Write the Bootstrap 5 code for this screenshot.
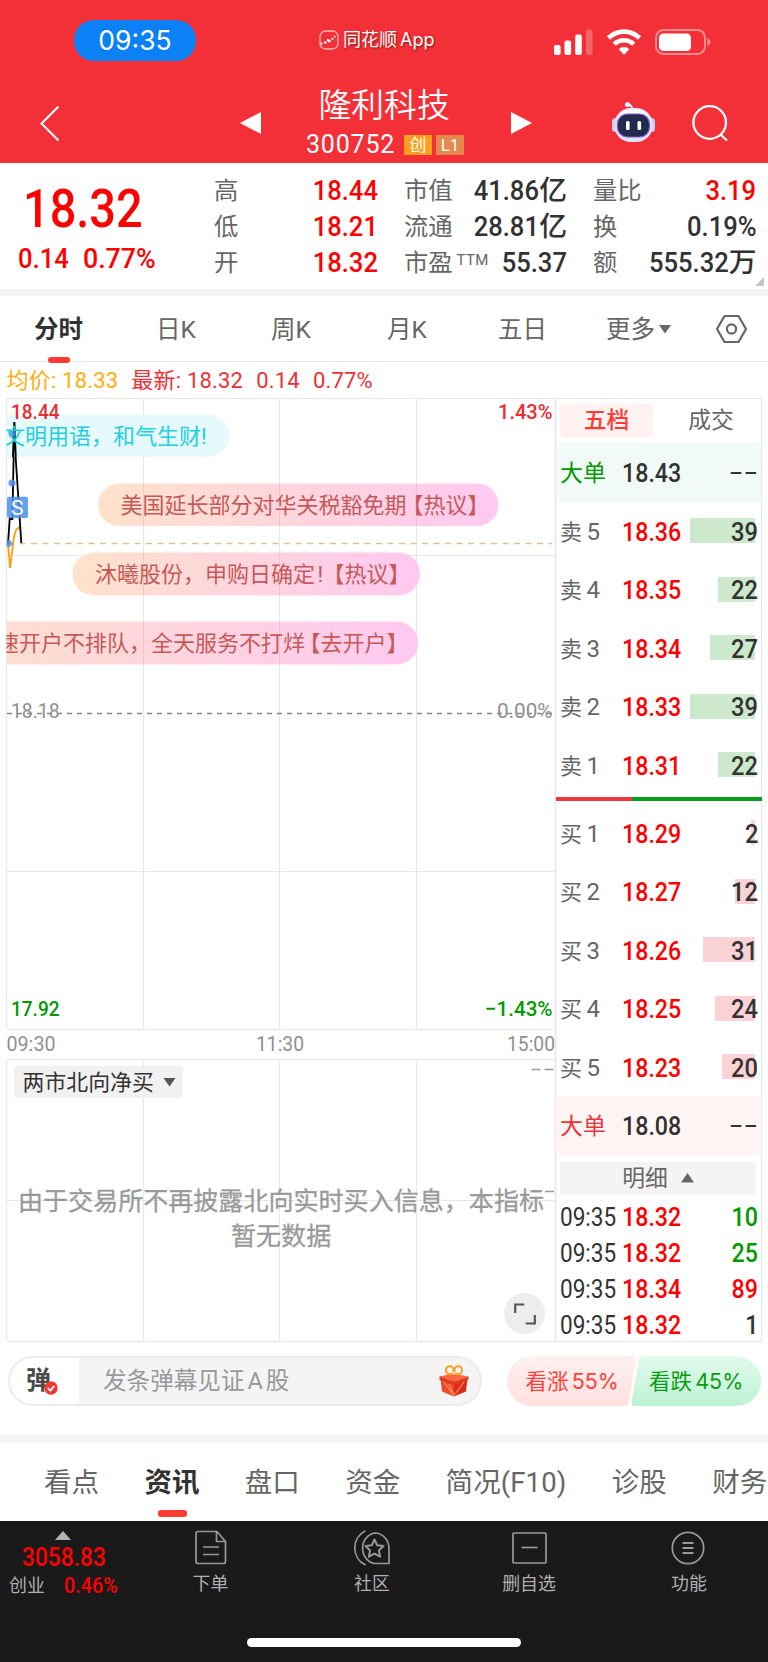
<!DOCTYPE html>
<html lang="zh-CN">
<head>
<meta charset="utf-8">
<meta name="viewport" content="width=device-width, initial-scale=1">
<title>隆利科技 300752</title>
<link href="https://cdn.jsdelivr.net/npm/bootstrap@5.3.0/dist/css/bootstrap.min.css" rel="stylesheet">
<style>
  body{font-family:Roboto,"Noto Sans CJK SC",sans-serif;width:768px;height:1662px;overflow:hidden;background:#fff;color:#323232;line-height:1}
  svg{display:block;overflow:visible}
  .up{color:#ff0000}.down{color:#090}.ink{color:#323232}.dim{color:#666}
  .din{display:inline-block;transform:scaleX(.91);transform-origin:0 50%;white-space:pre;font-weight:500}
  .din-r{transform-origin:100% 50%}
  .half{font-feature-settings:"halt"}
  /* header */
  .top{height:163px;background:#f33038;color:#fff}
  .statusbar{height:80px;padding-left:74px}
  .clock{width:122px;height:41px;border-radius:20px;background:#0c80f5;font:400 26.5px/41px Inter,sans-serif;text-align:center}
  .brand{margin-left:123px;width:231px;font:400 18px/24px Inter,"Noto Sans CJK SC",sans-serif;text-shadow:1px 1px 2px rgba(70,0,0,.6);gap:4px;word-spacing:-2px}
  .titlebar{display:grid;grid-template-columns:40px 200px 66px 158px 47px 100px 80px;height:83px}
  .name{font-size:32.8px;line-height:48px;font-weight:350;margin:1.5px 0 0 12.5px;white-space:nowrap}
  .code{font-size:25px;line-height:20px;letter-spacing:.8px}
  .tagbox{width:28.5px;height:20px;font-size:17px;line-height:20px;text-align:center}
  /* quote */
  .quote{height:126px;display:grid;grid-template-columns:214px 164px 189px 189.500px;padding-right:11.500px;position:relative}
  .big{font-size:54.5px;line-height:62px;transform:scaleX(.86);margin:13.5px 0 0 22.5px}
  .chg{font-size:27px;line-height:30px}
  .chg .din{transform:scaleX(.95)}
  .stat{display:grid;grid-template-rows:repeat(3,35.8px);padding-top:10px}
  .stat>div{display:flex;justify-content:space-between;line-height:36px;font-size:24.3px;color:#666;white-space:nowrap}
  .stat b{font-weight:500;font-size:27.8px}
  .stat .din{transform:scaleX(.92)}
  .ttm{font-size:15px;line-height:30px;margin-left:4px;font-weight:400;letter-spacing:.3px}
  .band{height:7px;background:#f4f4f4}
  /* period tabs */
  .periods{height:66px;display:grid;grid-template-columns:117px 118px 112px 120px 111px 138px 1fr;border-bottom:1px solid #e8e8e8;font-size:24.5px;line-height:67px;color:#666;text-align:center}
  .on{color:#323232;font-weight:700;position:relative}
  .on::after{content:"";position:absolute;left:50%;bottom:0;width:22px;height:6px;margin-left:-11px;border-radius:3px;background:#ff3b33}
  .legend-row{height:36px;padding-left:6.5px;font-size:22px;line-height:37px;letter-spacing:.2px;color:#ee2f36}
  .legend-row span{margin-right:13px}
  /* order book */
  .main{height:944px}
  .book{width:206px;border:1px solid #e8e8e8;border-left:0}
  .booktabs{height:44px;padding:4.5px 0 0 4px;font-size:22.8px;line-height:34px;text-align:center}
  .booktabs>div{width:93px;height:34px}
  .sel{background:#fff2f1;color:#ff3b33;border-radius:4px;font-weight:500}
  .lv{height:58.5px;display:grid;grid-template-columns:62px 71px 1fr;padding:0 3px 0 4px;line-height:61px;font-size:22px;color:#666;white-space:nowrap}
  .lv .n{font-size:24px;margin-left:4.5px}
  .lv .p,.tick .p{font-size:25.5px}
  .lv .q{position:relative;text-align:right;font-size:25.5px;color:#323232}
  .lv .q i{position:absolute;right:3.500px;top:16.5px;height:25px}
  .lv .q .din{position:relative;transform:scaleX(.93)}
  .sell i{background:#cce9cd}.buy i{background:#fbd3d6}
  .lv.bigrow{font-size:23px}
  .depth{height:3.5px;margin:3px -1px 3px 0}
  .detail{height:33px;margin:7px 5px 3px 4px;background:#f4f4f4;font-size:22.8px;line-height:33px;color:#666;gap:13px}
  .tick{height:36px;display:grid;grid-template-columns:62px 71px 1fr;padding:0 3px 0 4px;line-height:38px;font-size:25.5px;white-space:nowrap}
  .tick .t{transform:scaleX(.885);font-weight:450}
  /* comment bar */
  .cbar{height:93px;padding:14px 7px 0 8px}
  .cinput{width:474px;height:50px;border:2px solid #ececec;border-radius:25px;background:#f4f4f4;overflow:hidden}
  .clead{width:69px;background:#fff;padding-left:16px;position:relative;font-size:25px;line-height:45px;font-weight:700;color:#4a4a4a}
  .clead svg{position:absolute;left:34px;top:23px}
  .cph{margin-left:24px;width:336px;font-size:23.6px;line-height:46px;color:#999;word-spacing:-3px}
  .votes{width:254px;height:50px;margin-left:25px;position:relative;font-size:21.600px}
  .votes svg{position:absolute;left:0;top:0}
  .votes span{position:relative;line-height:51px;white-space:nowrap}
  .votes em{font:400 21.500px/50px Inter,sans-serif;margin-left:3px}
  /* info tabs */
  .info{height:78px;font-size:27.5px;line-height:80px;color:#666;gap:45.4px;padding-left:44px;white-space:nowrap;overflow:hidden}
  .info .on::after{width:29px;margin-left:-14px;bottom:4.5px;height:6.5px}
  .dock{height:141px;background:#1a1a1a;color:#b0b0b0;display:grid;grid-template-columns:130px 161px 162px 152px 1fr;font-size:17.9px;position:relative}
  .dock .it{display:grid;grid-template-rows:52px 20px;justify-items:center;align-content:start;line-height:22px}
  .dock .it svg{margin-top:9px}
  .home{position:absolute;left:247px;top:117px;width:274px;height:9px;border-radius:5px;background:#fff}
</style>
</head>
<body>
<header class="top">
  <div class="statusbar d-flex align-items-center">
    <div class="clock">09:35</div>
    <div class="brand d-flex align-items-center">
      <svg width="20" height="20" viewBox="0 0 20 20" fill="none" stroke="#fff"><rect x="1" y="1" width="18" height="18" rx="5.5" stroke="#ffb7b9" stroke-width="1.3"/><path d="M1.500 13.500h2M5 12.500h2.500M8 9.500l2 1.500M9.500 12l2-2M13 9.500l1-1.500M15.500 7l.5-1" stroke-width="2"/></svg>
      <span>同花顺 App</span>
    </div>
    <svg width="160" height="30" viewBox="0 0 160 30" fill="#fff">
      <rect x="4" y="20" width="6.6" height="10" rx="2"/><rect x="14.5" y="15.500" width="6.600" height="14.500" rx="2"/><rect x="25.200" y="9.500" width="6.600" height="20.500" rx="2"/><rect x="36" y="4.500" width="6.600" height="25.500" rx="2" opacity=".25"/>
      <g fill="none" stroke="#fff" stroke-width="4.600"><path d="M58.500 13a22 22 0 0 1 31 0"/><path d="M64.200 19.200a14 14 0 0 1 19.600 0"/></g><path d="M68.700 24.200a7.600 7.600 0 0 1 10.600 0L74 29.800z"/>
      <rect x="106" y="5" width="49" height="24" rx="7.500" fill="none" stroke="#fff" stroke-opacity=".45" stroke-width="2"/><rect x="109" y="8.500" width="32" height="17.500" rx="4.500"/><path d="M157.500 13q3 1.500 3 4t-3 4z" opacity=".5"/>
    </svg>
  </div>
  <div class="titlebar">
    <span></span>
    <svg width="20" height="36" viewBox="0 0 20 36" style="margin-top:26px"><path d="M18.500.5L1.500 17.500l17 17" fill="none" stroke="#fff" stroke-width="2"/></svg>
    <svg width="21" height="22" style="margin-top:32px"><path d="M0 11L21 0v22z" fill="#fff"/></svg>
    <div>
      <div class="name">隆利科技</div>
      <div class="d-flex align-items-center" style="margin-top:5.500px"><span class="code">300752</span><span class="tagbox" style="background:#ff9f1d;margin-left:9px">创</span><span class="tagbox" style="background:#e38a4c;margin-left:4px">L1</span></div>
    </div>
    <svg width="21" height="22" style="margin:32px 0 0 47px"><path d="M21 11L0 0v22z" fill="#fff"/></svg>
    <svg width="44" height="42" viewBox="0 0 44 42" style="margin:21px 0 0 100px">
      <path d="M21 9q1-5-5.500-6" fill="none" stroke="#e6e8fa" stroke-width="2"/><circle cx="16.500" cy="3.500" r="2.600" fill="#eceefb"/>
      <rect x="1" y="17" width="7" height="14" rx="3.500" fill="#c9cdf3"/><rect x="37" y="17" width="7" height="14" rx="3.500" fill="#c9cdf3"/>
      <rect x="3.500" y="7" width="38" height="34" rx="16" fill="#dfe2fa"/><path d="M6 19q4-11 16.500-11t16.500 11" fill="#fff"/>
      <rect x="6.500" y="13" width="32" height="23" rx="10" fill="#202b4e" stroke="#8358d8" stroke-width="1.200"/><rect x="15" y="20" width="3.600" height="9" rx="1.600" fill="#fff"/><rect x="26.500" y="20" width="3.600" height="9" rx="1.600" fill="#fff"/>
    </svg>
    <svg width="38" height="38" viewBox="0 0 38 38" fill="none" stroke="#fff" stroke-width="2.300" style="margin:24px 0 0 81px"><circle cx="17.700" cy="18.500" r="16.300"/><path d="M28.500 30.500l6.500 6"/></svg>
  </div>
</header>

<section class="quote">
  <div>
    <div class="din big up">18.32</div>
    <div class="chg up d-flex" style="padding-left:18px;margin-top:5px"><span class="din" style="width:65px">0.14</span><span class="din" style="transform:scaleX(.99)">0.77%</span></div>
  </div>
  <div class="stat">
    <div>高<b class="din din-r up">18.44</b></div><div>低<b class="din din-r up">18.21</b></div><div>开<b class="din din-r up">18.32</b></div>
  </div>
  <div class="stat" style="padding-left:26px">
    <div>市值<span class="ink"><b class="din din-r">41.86</b><b>亿</b></span></div><div>流通<span class="ink"><b class="din din-r">28.81</b><b>亿</b></span></div><div><span class="d-flex">市盈<span class="ttm">TTM</span></span><b class="din din-r ink">55.37</b></div>
  </div>
  <div class="stat" style="padding-left:26px">
    <div>量比<b class="din din-r up">3.19</b></div><div>换<b class="din din-r ink">0.19%</b></div><div>额<span class="ink"><b class="din din-r">555.32</b><b>万</b></span></div>
  </div>
  <svg width="9" height="9" style="position:absolute;right:4px;bottom:3px"><path d="M9 0v9H0z" fill="#c4c4c4"/></svg>
</section>
<div class="band"></div>

<nav class="periods">
  <div class="on">分时</div><div>日K</div><div>周K</div><div>月K</div><div>五日</div>
  <div class="d-flex align-items-center" style="padding-left:28px">更多<svg width="12" height="9" style="margin-left:4px"><path d="M0 0h12L6 8.500z" fill="#666"/></svg></div>
  <svg width="32" height="30" viewBox="0 0 32 30" fill="none" stroke="#666" stroke-width="2.200" stroke-linejoin="round" style="margin:18px 0 0"><path d="M8.500 2h14L30 15l-7.500 13h-14L1 15z"/><circle cx="15.500" cy="15" r="4.600"/></svg>
</nav>
<div class="legend-row"><span style="color:#ffae0c">均价: 18.33</span><span>最新: 18.32</span><span>0.14</span><span>0.77%</span></div>

<main class="main d-flex">
  <svg width="556" height="944" viewBox="0 398 556 944" font-family="Roboto,'Noto Sans CJK SC',sans-serif">
    <defs>
      <linearGradient id="dm"><stop offset="0" stop-color="#ffdfc6"/><stop offset=".5" stop-color="#ffd0da"/><stop offset="1" stop-color="#ffc3ef"/></linearGradient>
      <clipPath id="plot"><rect x="6.500" y="398" width="549" height="944"/></clipPath>
    </defs>
    <g fill="none" stroke="#e8e8e8" stroke-width="1.200">
      <path d="M6.500 398.500H556M6.500 555.500H555M6.500 871.500H555M6.500 1029.500H555M6.500 398V1029M143.500 398V1029M279.500 398V1029M416.500 398V1029"/>
      <path d="M6.500 1059.500H555M6.500 1200.500H555M6.500 1341.500H555M6.500 1059V1341M143.500 1059V1341M279.500 1059V1341M416.500 1059V1341"/>
      <path d="M555.500 398V1342" stroke-width="1.800"/>
    </g>
    <path d="M8 543.500H552" stroke="#dfc191" stroke-width="1.400" stroke-dasharray="6 5.500"/>
    <path d="M7 713.500H552" stroke="#888" stroke-width="1.300" stroke-dasharray="5 5"/>
    <g fill="none" stroke-width="1.800"><path d="M8 543L10 568L12 553L13.700 538L16 530L20 526.500" stroke="#ff9c14"/><path d="M8 543.500L9.700 519H12.400L14.300 422L15.700 458L21.300 543" stroke="#000"/></g>
    <g clip-path="url(#plot)" font-size="22">
      <rect x="-40" y="414.500" width="269" height="42.500" rx="21.200" fill="#e3f8fc" fill-opacity=".9"/>
      <path d="M13 457L14.300 422L15.700 457" fill="none" stroke="#000" stroke-width="2"/>
      <g fill="#4d91ec" opacity=".85"><circle cx="12.300" cy="434" r="3.600"/><circle cx="12" cy="483" r="3.600"/><circle cx="8.500" cy="543.500" r="3.400"/><rect x="7" y="496.700" width="21" height="21.300" rx="2"/></g>
      <text x="17.300" y="515" font-size="21" fill="#fff" text-anchor="middle">S</text>
      <text x="3" y="444" fill="#22d0dd">文明用语，和气生财!</text>
      <g fill="url(#dm)" fill-opacity=".9"><rect x="98" y="483.500" width="400.500" height="42.500" rx="21.200"/><rect x="72.500" y="552.500" width="347.500" height="43" rx="21.500"/><rect x="-70" y="621.500" width="488" height="43" rx="21.500"/></g>
      <g stroke="#d9a9b5" stroke-opacity=".35"><path d="M143.500 484v42M279.500 484v42M416.500 484v42M143.500 553v42M279.500 553v42M143.500 622v42M279.500 622v42"/></g>
      <g fill="#c45a58">
        <text y="513"><tspan x="120.500">美国延长部分对华关税豁免期</tspan><tspan x="412.500" class="half">【热议】</tspan></text>
        <text y="582"><tspan x="95">沐曦股份，申购日确定</tspan><tspan x="317.500">!</tspan><tspan x="333.500" class="half">【热议】</tspan></text>
        <text y="651"><tspan x="-3">速开户不排队，全天服务不打烊</tspan><tspan x="309.500" class="half">【去开户】</tspan></text>
      </g>
    </g>
    <g font-size="21" font-weight="500">
      <text x="11" y="418.500" fill="#e92d33" textLength="48.500" lengthAdjust="spacingAndGlyphs">18.44</text>
      <text x="498" y="418.500" fill="#e92d33" textLength="54.500" lengthAdjust="spacingAndGlyphs">1.43%</text>
      <text x="11" y="717.500" fill="#8f8f8f" font-weight="400" textLength="48.500" lengthAdjust="spacingAndGlyphs">18.18</text>
      <text x="497" y="717.500" fill="#8f8f8f" font-weight="400" textLength="55.500" lengthAdjust="spacingAndGlyphs">0.00%</text>
      <text x="11" y="1016" fill="#090" textLength="48.500" lengthAdjust="spacingAndGlyphs">17.92</text>
      <text x="485" y="1016" fill="#090" textLength="67.500" lengthAdjust="spacingAndGlyphs">−1.43%</text>
    </g>
    <g font-size="21" fill="#8f8f8f">
      <text x="6.500" y="1050.500" textLength="49" lengthAdjust="spacingAndGlyphs">09:30</text>
      <text x="256" y="1050.500" textLength="48" lengthAdjust="spacingAndGlyphs">11:30</text>
      <text x="507" y="1050.500" textLength="48" lengthAdjust="spacingAndGlyphs">15:00</text>
    </g>
    <rect x="14" y="1066" width="169" height="32" rx="3" fill="#f1f1f1"/>
    <text x="22.500" y="1090" font-size="21.900" fill="#333">两市北向净买</text>
    <path d="M163.500 1078h12l-6 8.500z" fill="#555"/>
    <path d="M531.500 1069.500h9M544.500 1069.500h9M531.500 1191.500h9M545 1191.500h9" stroke="#999" stroke-width="1.600"/>
    <g fill="#999" font-size="25.050"><text x="18" y="1210" stroke="#999" stroke-width=".3">由于交易所不再披露北向实时买入信息，本指标</text><text x="231" y="1245" stroke="#999" stroke-width=".3">暂无数据</text></g>
    <circle cx="524.600" cy="1313.500" r="20.500" fill="#ededed"/>
    <path d="M515.200 1313v-8.500h9M534.800 1315v8.500h-9" fill="none" stroke="#555" stroke-width="2.200"/>
  </svg>

  <aside class="book">
    <div class="booktabs d-flex"><div class="sel">五档</div><div class="dim" style="margin-left:12px;width:92px">成交</div></div>
    <div class="lv bigrow" style="background:#f1faf6"><span class="down">大单</span><span class="din p ink">18.43</span><span class="q">−−</span></div>
    <div class="sell">
      <div class="lv"><span>卖<span class="n">5</span></span><span class="din p up">18.36</span><span class="q"><i style="width:65px"></i><span class="din din-r">39</span></span></div>
      <div class="lv"><span>卖<span class="n">4</span></span><span class="din p up">18.35</span><span class="q"><i style="width:37px"></i><span class="din din-r">22</span></span></div>
      <div class="lv"><span>卖<span class="n">3</span></span><span class="din p up">18.34</span><span class="q"><i style="width:45px"></i><span class="din din-r">27</span></span></div>
      <div class="lv"><span>卖<span class="n">2</span></span><span class="din p up">18.33</span><span class="q"><i style="width:65px"></i><span class="din din-r">39</span></span></div>
      <div class="lv"><span>卖<span class="n">1</span></span><span class="din p up">18.31</span><span class="q"><i style="width:37px"></i><span class="din din-r">22</span></span></div>
    </div>
    <div class="depth d-flex"><div style="width:37%;background:#f0353b"></div><div class="flex-fill" style="background:#0a9b18"></div></div>
    <div class="buy">
      <div class="lv"><span>买<span class="n">1</span></span><span class="din p up">18.29</span><span class="q"><i style="width:4px"></i><span class="din din-r">2</span></span></div>
      <div class="lv"><span>买<span class="n">2</span></span><span class="din p up">18.27</span><span class="q"><i style="width:20px"></i><span class="din din-r">12</span></span></div>
      <div class="lv"><span>买<span class="n">3</span></span><span class="din p up">18.26</span><span class="q"><i style="width:52px"></i><span class="din din-r">31</span></span></div>
      <div class="lv"><span>买<span class="n">4</span></span><span class="din p up">18.25</span><span class="q"><i style="width:40px"></i><span class="din din-r">24</span></span></div>
      <div class="lv"><span>买<span class="n">5</span></span><span class="din p up">18.23</span><span class="q"><i style="width:33px"></i><span class="din din-r">20</span></span></div>
    </div>
    <div class="lv bigrow" style="background:#fff5f5"><span style="color:#ee3338">大单</span><span class="din p ink">18.08</span><span class="q">−−</span></div>
    <div class="detail d-flex align-items-center justify-content-center"><span>明细</span><svg width="13" height="10"><path d="M0 9.500h13L6.500 0z" fill="#666"/></svg></div>
    <div class="tick"><span class="din t">09:35</span><span class="din p up">18.32</span><span class="text-end"><span class="din din-r down">10</span></span></div>
    <div class="tick"><span class="din t">09:35</span><span class="din p up">18.32</span><span class="text-end"><span class="din din-r down">25</span></span></div>
    <div class="tick"><span class="din t">09:35</span><span class="din p up">18.34</span><span class="text-end"><span class="din din-r up">89</span></span></div>
    <div class="tick"><span class="din t">09:35</span><span class="din p up">18.32</span><span class="text-end"><span class="din din-r">1</span></span></div>
  </aside>
</main>

<div class="cbar d-flex">
  <div class="cinput d-flex">
    <div class="clead">弹<svg width="14" height="14" viewBox="0 0 14 14"><circle cx="7" cy="7" r="6.700" fill="#f5392f"/><path d="M3.800 7l2.500 2.600 4-4.700" fill="none" stroke="#fff" stroke-width="1.800"/></svg></div>
    <div class="cph">发条弹幕见证 A 股</div>
    <svg width="30" height="32" viewBox="0 0 30 32" style="margin-top:7px">
      <path d="M1.500 13L15 18v13.500L3 26.500z" fill="#ee4a2e"/><path d="M28.500 13L15 18v13.500l12-5z" fill="#d92c1c"/><path d="M.5 11.500L14 8.500l15.500 3L15 16.500z" fill="#f9663f"/><path d="M.5 11.500v3.500L15 20v-3.500zM29.500 11.500v3.500L15 20v-3.500z" fill="#e2391f"/><path d="M5 17l10 13.500M25 17L15 30.500M10 19l5 11.500" stroke="#f98a55" stroke-width="1.200"/>
      <ellipse cx="10.800" cy="5.200" rx="3.800" ry="4" fill="none" stroke="#f0a630" stroke-width="2.200"/><ellipse cx="19.200" cy="5.200" rx="3.800" ry="4" fill="none" stroke="#f0a630" stroke-width="2.200"/><circle cx="15" cy="8" r="2" fill="#ffd36b"/>
    </svg>
  </div>
  <div class="votes">
    <svg width="254" height="50" viewBox="0 0 254 50"><defs><linearGradient id="r" x2="0" y2="1"><stop stop-color="#fff1f0"/><stop offset="1" stop-color="#ffe1df"/></linearGradient><linearGradient id="g" x2="0" y2="1"><stop stop-color="#e2faed"/><stop offset="1" stop-color="#bdf2d4"/></linearGradient></defs>
      <path d="M25 0H125q4.500 0 4 4l-7 42q-.700 4-4 4H25A25 25 0 0 1 25 0z" fill="url(#r)"/><path d="M137 0H229a25 25 0 0 1 0 50H128q-4 0-3.500-4l7-42q.800-4 5.500-4z" fill="url(#g)"/></svg>
    <div class="d-flex"><span style="margin-left:18.500px;width:123.500px;color:#ff4038">看涨<em>55%</em></span><span style="color:#0a9b12">看跌<em>45%</em></span></div>
  </div>
</div>
<div class="band" style="height:8px"></div>

<nav class="info d-flex">
  <span>看点</span><span class="on">资讯</span><span>盘口</span><span>资金</span><span style="letter-spacing:.1px">简况(F10)</span><span>诊股</span><span>财务</span>
</nav>

<footer class="dock">
  <div>
    <svg width="16" height="9" style="margin:10px 0 0 55px"><path d="M0 9h16L8 0z" fill="#b3b3b3"/></svg>
    <div class="up" style="padding-left:22px;font-size:25px;line-height:30px;margin-top:3px"><span class="din">3058.83</span></div>
    <div class="d-flex" style="padding-left:9px;line-height:26px"><span>创业</span><span class="din up" style="font-size:22.500px;line-height:24px;margin-left:19px;transform:scaleX(.88)">0.46%</span></div>
  </div>
  <div class="it"><svg width="32" height="35" viewBox="0 0 32 35" fill="none" stroke="#999" stroke-width="1.700"><path d="M3 1.500h19l8.500 10v20a2 2 0 0 1-2 2H3a2 2 0 0 1-2-2v-28a2 2 0 0 1 2-2zM21.500 1.500v10h9M8 17h16M8 24.500h16"/></svg><span>下单</span></div>
  <div class="it"><svg width="36" height="36" viewBox="0 0 36 36" fill="none" stroke="#999" stroke-width="1.700"><path d="M20.500 3A14.500 15.500 0 0 1 35 18.500V33.500H20.500A14.500 15.500 0 0 1 20.500 3z"/><path d="M11.500.8A19 19 0 0 0 11.500 35"/><path d="M20.500 9.500l2.700 5.800 6.300.8-4.600 4.300 1.200 6.300-5.600-3.100-5.600 3.100 1.200-6.300-4.600-4.300 6.300-.8z" stroke-width="2" stroke-linejoin="round"/></svg><span>社区</span></div>
  <div class="it"><svg width="35" height="35" viewBox="0 0 35 35" fill="none" stroke="#999" stroke-width="1.700"><rect x="1" y="3" width="33" height="30" rx="1"/><path d="M9.500 17.500h16"/></svg><span>删自选</span></div>
  <div class="it" style="padding-left:5px"><svg width="34" height="35" viewBox="0 0 34 35" fill="none" stroke="#999" stroke-width="1.700"><circle cx="16" cy="18" r="15.700"/><path d="M10.500 13h11M10.500 18h11M10.500 23h11" stroke-width="1.900"/></svg><span>功能</span></div>
  <div class="home"></div>
</footer>
<script src="https://cdn.jsdelivr.net/npm/bootstrap@5.3.0/dist/js/bootstrap.bundle.min.js"></script>
</body>
</html>
